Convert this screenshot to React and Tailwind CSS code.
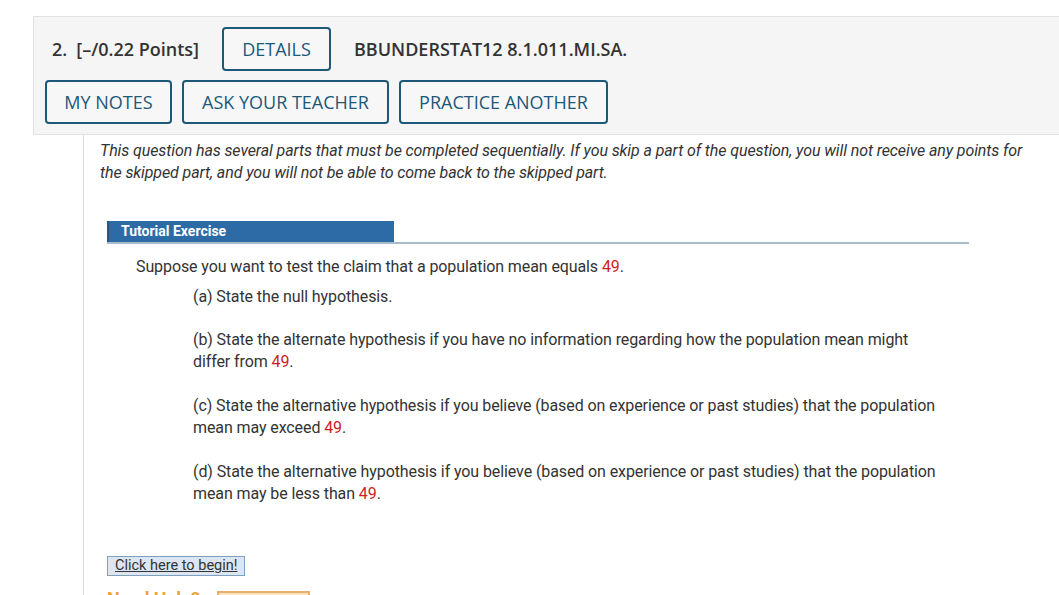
import React from 'react';

const Red = ({ children }) => <span className="text-[#cc1f1f]">{children}</span>;

const OutlineButton = ({ children, className = '' }) => (
  <button
    className={`h-[44px] rounded-[4px] border-2 border-[#1c5878] bg-[#f7f7f7] text-[18px] font-medium text-[#1c5878] leading-none ${className}`}
  >
    {children}
  </button>
);

export default function App() {
  return (
    <div className="w-full h-[595px] overflow-hidden bg-white font-['Roboto',sans-serif] text-[#333]">
      <div className="pt-[16px] pl-[33px]">
        {/* Question header */}
        <div className="w-[1040px] border border-[#e2e2e2] bg-[#f5f5f5] pt-[10px] pb-[10px] pl-[11px] font-['Open_Sans',sans-serif]">
          <div className="flex items-center pl-[7px]">
            <span className="text-[18px] font-semibold text-[#333]">2.</span>
            <span className="ml-[9px] text-[18px] font-semibold text-[#333]">[–/0.22 Points]</span>
            <OutlineButton className="ml-[23px] w-[109px]">DETAILS</OutlineButton>
            <span className="ml-[23px] text-[18px] font-semibold text-[#333]">BBUNDERSTAT12 8.1.011.MI.SA.</span>
          </div>
          <div className="mt-[9px] flex gap-[10px]">
            <OutlineButton className="w-[127px]">MY NOTES</OutlineButton>
            <OutlineButton className="w-[207px]">ASK YOUR TEACHER</OutlineButton>
            <OutlineButton className="w-[209px]">PRACTICE ANOTHER</OutlineButton>
          </div>
        </div>

        {/* Question body */}
        <div className="ml-[50px] border-l border-[#dcdcdc] pl-[16px] pt-[5px]">
          <p className="text-[16px] italic leading-[22px] tracking-[-0.1px] whitespace-nowrap text-[#333]">
            This question has several parts that must be completed sequentially. If you skip a part of the question, you will not receive any points for
            <br />
            the skipped part, and you will not be able to come back to the skipped part.
          </p>

          <div className="mt-[37px] ml-[7px] w-[862px] border-b-2 border-[#a9bccd]">
            <div className="w-[287px] h-[21px] bg-[#2d6ba6] border-l-2 border-[#22578a] pl-[12px] flex items-center text-[14px] font-bold text-white">
              Tutorial Exercise
            </div>
          </div>

          <div className="pl-[36px] text-[16px] leading-[22px] tracking-[-0.1px] whitespace-nowrap">
            <p className="mt-[12px]">
              Suppose you want to test the claim that a population mean equals <Red>49</Red>.
            </p>
            <div className="pl-[57px]">
              <p className="mt-[8px]">(a) State the null hypothesis.</p>
              <p className="mt-[21px]">
                (b) State the alternate hypothesis if you have no information regarding how the population mean might
                <br />
                differ from <Red>49</Red>.
              </p>
              <p className="mt-[22px]">
                (c) State the alternative hypothesis if you believe (based on experience or past studies) that the population
                <br />
                mean may exceed <Red>49</Red>.
              </p>
              <p className="mt-[22px]">
                (d) State the alternative hypothesis if you believe (based on experience or past studies) that the population
                <br />
                mean may be less than <Red>49</Red>.
              </p>
            </div>
          </div>

          <div className="mt-[48px] ml-[7px]">
            <button className="h-[20px] border border-[#7f9fc2] bg-[#dbe6f2] px-[7px] text-[14.5px] leading-none text-[#333] underline">
              Click here to begin!
            </button>
          </div>

          <div className="mt-[10px] ml-[7px] flex items-start gap-[17px]">
            <span className="text-[18px] leading-[24px] font-bold text-[#f0a23a]">Need Help?</span>
            <button className="mt-[4px] h-[24px] w-[93px] border-2 border-[#e8b070] bg-[#fce3c0] text-[13px] text-[#333]">
              Read It
            </button>
          </div>
        </div>
      </div>
    </div>
  );
}
